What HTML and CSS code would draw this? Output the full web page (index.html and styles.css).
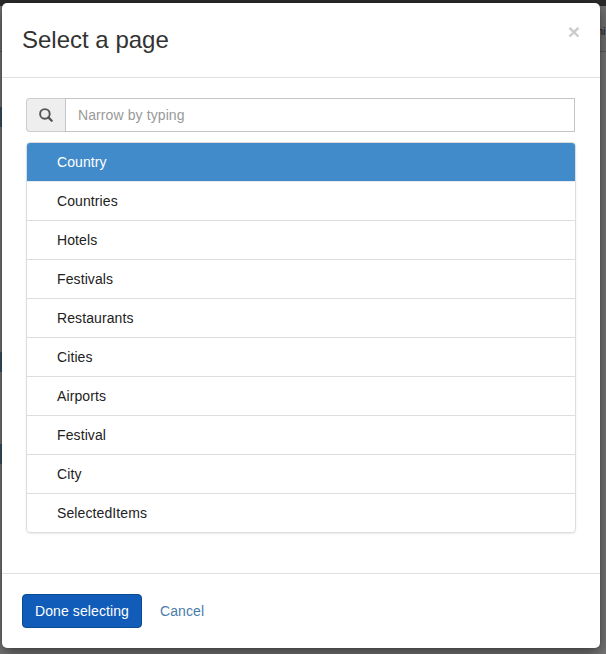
FILE: index.html
```html
<!DOCTYPE html>
<html lang="en">
<head>
<meta charset="utf-8">
<title>Select a page</title>
<link rel="stylesheet" href="styles.css">
</head>
<body>
<div class="page">
  <div class="navbar"></div>
  <div class="toolbar">hi</div>
  <span class="mark mark-a"></span>
  <span class="mark mark-b"></span>
  <span class="mark mark-c"></span>
</div>
<div class="modal">
  <header class="modal-header">
    <h4 class="title">Select a page</h4>
    <button class="close">×</button>
  </header>
  <main class="modal-body">
    <div class="input-group">
      <span class="addon">
        <svg width="14" height="14" viewBox="0 0 14 14" fill="none" stroke="#555"><circle cx="5.9" cy="5.9" r="4.8" stroke-width="1.9"/><path d="M9.4 9.4L12.7 12.7" stroke-width="2.3" stroke-linecap="round"/></svg>
      </span>
      <input class="field" type="text" placeholder="Narrow by typing">
    </div>
    <div class="list">
      <a class="item active">Country</a>
      <a class="item">Countries</a>
      <a class="item">Hotels</a>
      <a class="item">Festivals</a>
      <a class="item">Restaurants</a>
      <a class="item">Cities</a>
      <a class="item">Airports</a>
      <a class="item">Festival</a>
      <a class="item">City</a>
      <a class="item">SelectedItems</a>
    </div>
  </main>
  <footer class="modal-footer">
    <button class="done">Done selecting</button>
    <a class="cancel">Cancel</a>
  </footer>
</div>
</body>
</html>
```
FILE: styles.css
```css
* { box-sizing: border-box; }
body {
  margin: 0;
  height: 654px;
  overflow: hidden;
  padding: 3px 6px 6px 2px;
  font: 14px/20px "Liberation Sans", Arial, sans-serif;
  letter-spacing: .1px;
  color: #222;
}
.page {
  position: absolute;
  inset: 0;
  z-index: -1;
  overflow: hidden;
  background: #777;
}
.navbar { height: 6px; background: #2b2b2b; }
.toolbar {
  height: 46px;
  padding: 15px 0 0 597px;
  border-bottom: 1px solid #5c5c5c;
  background: #727272;
  font-size: 11px;
  letter-spacing: 0;
  white-space: nowrap;
}
.mark { position: absolute; left: 0; width: 2px; height: 20px; background: #3f5264; }
.mark-a { top: 107px; }
.mark-b { top: 352px; }
.mark-c { top: 444px; }
.modal {
  display: flex;
  flex-direction: column;
  width: 598px;
  height: 645px;
  border-radius: 5px;
  background: #fff;
  box-shadow: 0 5px 15px rgba(0, 0, 0, .5), 0 0 1px rgba(0, 0, 0, .5);
}
.modal-header {
  display: flex;
  justify-content: space-between;
  align-items: flex-start;
  height: 75px;
  padding: 20px;
  border-bottom: 1px solid #e0e0e0;
}
.title {
  margin: 0;
  font-size: 24px;
  line-height: 34px;
  font-weight: 400;
  letter-spacing: 0;
  color: #333;
}
.close {
  padding: 0;
  border: 0;
  background: none;
  font: bold 21px/17px "Liberation Sans", Arial, sans-serif;
  color: #ccc;
}
.modal-body { flex: 1; padding: 20px 24px 0; }
.input-group { display: flex; width: 549px; height: 34px; }
.addon {
  display: flex;
  align-items: center;
  justify-content: center;
  width: 39px;
  border: 1px solid #ccc;
  border-right: 0;
  border-radius: 4px 0 0 4px;
  background: #eee;
}
.field {
  flex: 1;
  padding: 6px 12px;
  border: 1px solid #c4c4c4;
  border-radius: 0;
  font: inherit;
  letter-spacing: inherit;
  outline: 0;
}
.field::placeholder { color: #999; opacity: 1; }
.list {
  margin-top: 10px;
  border: 1px solid #ddd;
  border-radius: 4px;
  box-shadow: 0 1px 2px rgba(0, 0, 0, .075);
}
.item {
  display: block;
  height: 39px;
  padding: 9px 30px;
  border-bottom: 1px solid #ddd;
}
.item:last-child { border-bottom: 0; height: 38px; }
.item.active {
  border-radius: 3px 3px 0 0;
  border-bottom-color: #e4eaf0;
  background: #428bca;
  background-clip: padding-box;
  color: #fff;
}
.modal-footer {
  display: flex;
  align-items: center;
  height: 75px;
  padding: 0 20px;
  border-top: 1px solid #e0e0e0;
}
.done {
  width: 120px;
  height: 34px;
  padding: 0;
  border: 1px solid #0d4a94;
  border-radius: 4px;
  background: #115cb8;
  font: inherit;
  letter-spacing: inherit;
  white-space: nowrap;
  color: #fff;
}
.cancel { margin-left: 18px; color: #4a7cab; }
```
